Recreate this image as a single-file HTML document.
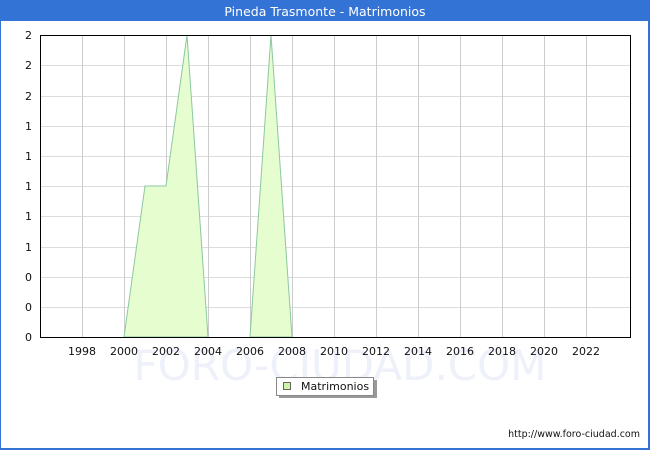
<!DOCTYPE html>
<html><head><style>
body{margin:0;width:650px;height:450px;overflow:hidden;font-family:"DejaVu Sans",sans-serif;}
</style></head><body>
<svg width="650" height="450" xmlns="http://www.w3.org/2000/svg" font-family="DejaVu Sans, sans-serif">
<rect x="0" y="0" width="650" height="450" fill="#3473d6"/>
<rect x="1" y="21" width="647" height="427" fill="#fff"/>
<text x="325" y="16" fill="#fff" font-size="12.5" text-anchor="middle">Pineda Trasmonte - Matrimonios</text>
<text x="340" y="380" fill="#eef0fa" font-size="42" text-anchor="middle" font-weight="normal">FORO-CIUDAD.COM</text>
<g stroke="#dcdcdc" stroke-width="1">
<line x1="40" x2="630" y1="65.5" y2="65.5"/><line x1="40" x2="630" y1="96.5" y2="96.5"/><line x1="40" x2="630" y1="126.5" y2="126.5"/><line x1="40" x2="630" y1="156.5" y2="156.5"/><line x1="40" x2="630" y1="186.5" y2="186.5"/><line x1="40" x2="630" y1="216.5" y2="216.5"/><line x1="40" x2="630" y1="247.5" y2="247.5"/><line x1="40" x2="630" y1="277.5" y2="277.5"/><line x1="40" x2="630" y1="307.5" y2="307.5"/>
</g>
<g stroke="#cccccc" stroke-width="1">
<line x1="82.5" x2="82.5" y1="35" y2="337"/><line x1="124.5" x2="124.5" y1="35" y2="337"/><line x1="166.5" x2="166.5" y1="35" y2="337"/><line x1="208.5" x2="208.5" y1="35" y2="337"/><line x1="250.5" x2="250.5" y1="35" y2="337"/><line x1="292.5" x2="292.5" y1="35" y2="337"/><line x1="334.5" x2="334.5" y1="35" y2="337"/><line x1="376.5" x2="376.5" y1="35" y2="337"/><line x1="418.5" x2="418.5" y1="35" y2="337"/><line x1="460.5" x2="460.5" y1="35" y2="337"/><line x1="502.5" x2="502.5" y1="35" y2="337"/><line x1="544.5" x2="544.5" y1="35" y2="337"/><line x1="586.5" x2="586.5" y1="35" y2="337"/>
</g>
<polygon points="124,337 145,186 166,186 187,35 208,337" fill="#e5fdcf" stroke="#8cc8a0" stroke-width="1"/>
<polygon points="250,337 271,35 292,337" fill="#e5fdcf" stroke="#8cc8a0" stroke-width="1"/>
<rect x="40.5" y="35.5" width="590" height="302" fill="none" stroke="#000" stroke-width="1"/>
<g font-size="11" fill="#111" text-anchor="end">
<text x="32" y="39">2</text><text x="32" y="69">2</text><text x="32" y="100">2</text><text x="32" y="130">1</text><text x="32" y="160">1</text><text x="32" y="190">1</text><text x="32" y="220">1</text><text x="32" y="251">1</text><text x="32" y="281">0</text><text x="32" y="311">0</text><text x="32" y="341">0</text>
</g>
<g font-size="11" fill="#111" text-anchor="middle">
<text x="82" y="355">1998</text><text x="124" y="355">2000</text><text x="166" y="355">2002</text><text x="208" y="355">2004</text><text x="250" y="355">2006</text><text x="292" y="355">2008</text><text x="334" y="355">2010</text><text x="376" y="355">2012</text><text x="418" y="355">2014</text><text x="460" y="355">2016</text><text x="502" y="355">2018</text><text x="544" y="355">2020</text><text x="586" y="355">2022</text>
</g>
<rect x="279" y="380" width="98" height="18" fill="#999"/>
<rect x="276.5" y="377.5" width="97" height="18" fill="#fff" stroke="#888"/>
<rect x="283.5" y="382.5" width="7" height="7" fill="#ccf5a8" stroke="#666"/>
<text x="301" y="390" font-size="11" fill="#111">Matrimonios</text>
<text x="640" y="437" font-size="9.5" fill="#111" text-anchor="end">http://www.foro-ciudad.com</text>
</svg>
</body></html>
